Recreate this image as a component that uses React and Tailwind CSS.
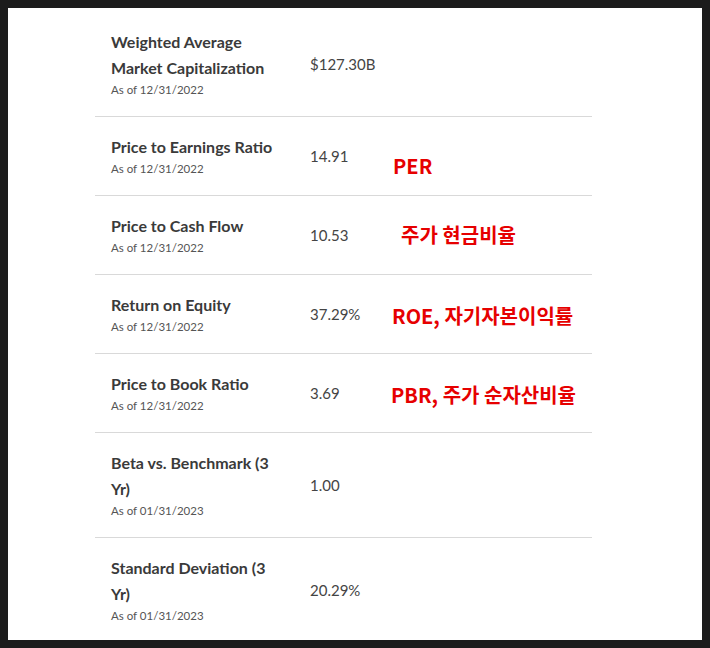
import React from "react";

const ROWS = [
  {
    label: "Weighted Average Market Capitalization",
    date: "As of 12/31/2022",
    value: "$127.30B",
  },
  {
    label: "Price to Earnings Ratio",
    date: "As of 12/31/2022",
    value: "14.91",
    note: "PER",
    noteClass: "ml-[1px] translate-y-[10px]",
  },
  {
    label: "Price to Cash Flow",
    date: "As of 12/31/2022",
    value: "10.53",
    note: "주가 현금비율",
    noteClass: "ml-[9px]",
  },
  {
    label: "Return on Equity",
    date: "As of 12/31/2022",
    value: "37.29%",
    note: "ROE, 자기자본이익률",
    noteClass: "translate-y-[2px]",
  },
  {
    label: "Price to Book Ratio",
    date: "As of 12/31/2022",
    value: "3.69",
    note: "PBR, 주가 순자산비율",
    noteClass: "-ml-[1px] translate-y-[2px]",
  },
  {
    label: "Beta vs. Benchmark (3 Yr)",
    date: "As of 01/31/2023",
    value: "1.00",
  },
  {
    label: "Standard Deviation (3 Yr)",
    date: "As of 01/31/2023",
    value: "20.29%",
  },
];

const App = () => {
  return (
    <div className="min-h-screen bg-[#1c1c1c] p-2 font-['Lato','Noto_Sans',sans-serif]">
      <div className="h-[632px] overflow-hidden bg-white">
        <div className="ml-[87px] w-[497px] pt-1">
          {ROWS.map((row, i) => (
            <div
              key={row.label}
              className={`flex items-center py-[17px] pl-4 ${
                i < ROWS.length - 1 ? "border-b border-[#d9d9d9]" : ""
              }`}
            >
              {/* label + date */}
              <div className="w-[199px] shrink-0 pr-[27px]">
                <div className="text-[16px] font-bold leading-[26px] text-[#3a3a3a]">
                  {row.label}
                </div>
                <div className="text-[11.5px] leading-[18px] text-[#555]">
                  {row.date}
                </div>
              </div>

              {/* value */}
              <div className="w-[82px] shrink-0 text-[15px] text-[#444]">
                {row.value}
              </div>

              {/* red annotation */}
              {row.note && (
                <div
                  className={`whitespace-nowrap font-['Noto_Sans_CJK_KR',sans-serif] text-[20px] font-bold leading-none text-[#e60000] ${row.noteClass}`}
                >
                  {row.note}
                </div>
              )}
            </div>
          ))}
        </div>
      </div>
    </div>
  );
};

export default App;
